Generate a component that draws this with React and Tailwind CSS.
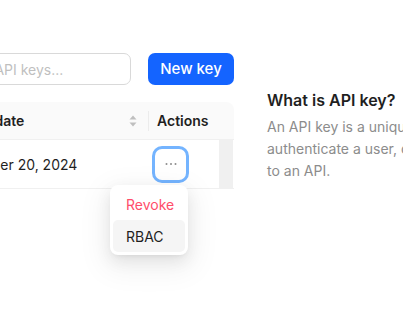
import React from "react";

function SortIcon() {
  return (
    <svg width="8" height="12" viewBox="0 0 8 12" className="shrink-0">
      <path d="M4 0.5 L7.5 4.5 L0.5 4.5 Z" fill="#bfbfbf" />
      <path d="M4 11.5 L7.5 7.5 L0.5 7.5 Z" fill="#bfbfbf" />
    </svg>
  );
}

function Dots() {
  return (
    <svg width="14" height="4" viewBox="0 0 14 4">
      <circle cx="2.5" cy="2" r="1" fill="#8c8c8c" />
      <circle cx="7" cy="2" r="1" fill="#8c8c8c" />
      <circle cx="11.5" cy="2" r="1" fill="#8c8c8c" />
    </svg>
  );
}

export default function App() {
  return (
    <div
      className="relative w-[403px] h-[325px] overflow-hidden bg-white"
      style={{ fontFamily: "Inter, 'Noto Sans', sans-serif" }}
    >
      <div className="flex ml-[-71px] pt-[53px]">
        <div className="w-[305px] shrink-0 flex flex-col">
          <div className="flex gap-[17px]">
            <div className="w-[202px] h-[32px] rounded-[7px] border border-[#d9d9d9] flex items-center px-[11px] text-[14px] text-[#bfbfbf]">
              <span className="pl-[3px]">Search API keys...</span>
            </div>
            <button className="w-[86px] h-[32px] rounded-[7px] bg-[#1464ff] text-white text-[15px] font-medium flex items-center justify-center">
              New key
            </button>
          </div>
          <div className="mt-[17px] w-full">
            <div className="flex h-[38px] bg-[#fafafa] rounded-tr-[8px] border-b border-[#f0f0f0] text-[14px] font-semibold text-[#1f1f1f]">
              <div className="w-[219px] flex items-center justify-between pl-[16px] pr-[11px]">
                <span>Last update</span>
                <SortIcon />
              </div>
              <div className="w-px h-[20px] bg-[#ececec] self-center" />
              <div className="w-[70px] flex items-center pl-[8px]">Actions</div>
              <div className="w-[14px]" />
            </div>
            <div className="flex h-[49px] border-b border-[#f0f0f0] text-[14px] text-[#1f1f1f]">
              <div className="w-[219px] flex items-center pl-[16px]">
                December 20, 2024
              </div>
              <div className="w-[71px] flex items-center pl-[7px]">
                <button className="w-[31px] h-[31px] rounded-[7px] bg-white ring-[3px] ring-[#74b4ff] flex items-center justify-center">
                  <Dots />
                </button>
              </div>
              <div className="w-[14px] bg-[#f0f0f0]" />
            </div>
          </div>
        </div>
        <div className="ml-[33px] w-[340px] shrink-0 pt-[35px]">
          <div className="text-[16px] leading-[24px] font-semibold text-[#1f1f1f]">
            What is API key?
          </div>
          <p className="mt-[4px] text-[14px] leading-[22px] text-[#8c8c8c]">
            An API key is a unique identifier used to authenticate a user, developer, or calling program to an API.
          </p>
        </div>
      </div>

      <div className="absolute left-[110px] top-[185px] w-[78px] rounded-[8px] bg-white p-[3px] shadow-[0_6px_16px_0_rgba(0,0,0,0.08),0_3px_6px_-4px_rgba(0,0,0,0.12),0_9px_28px_8px_rgba(0,0,0,0.05)]">
        <div className="h-[32px] flex items-center px-[13px] text-[14px] text-[#ff4d6a]">Revoke</div>
        <div className="h-[32px] flex items-center px-[13px] text-[14px] text-[#1f1f1f] bg-[#f5f5f5] rounded-[5px]">RBAC</div>
      </div>
    </div>
  );
}
